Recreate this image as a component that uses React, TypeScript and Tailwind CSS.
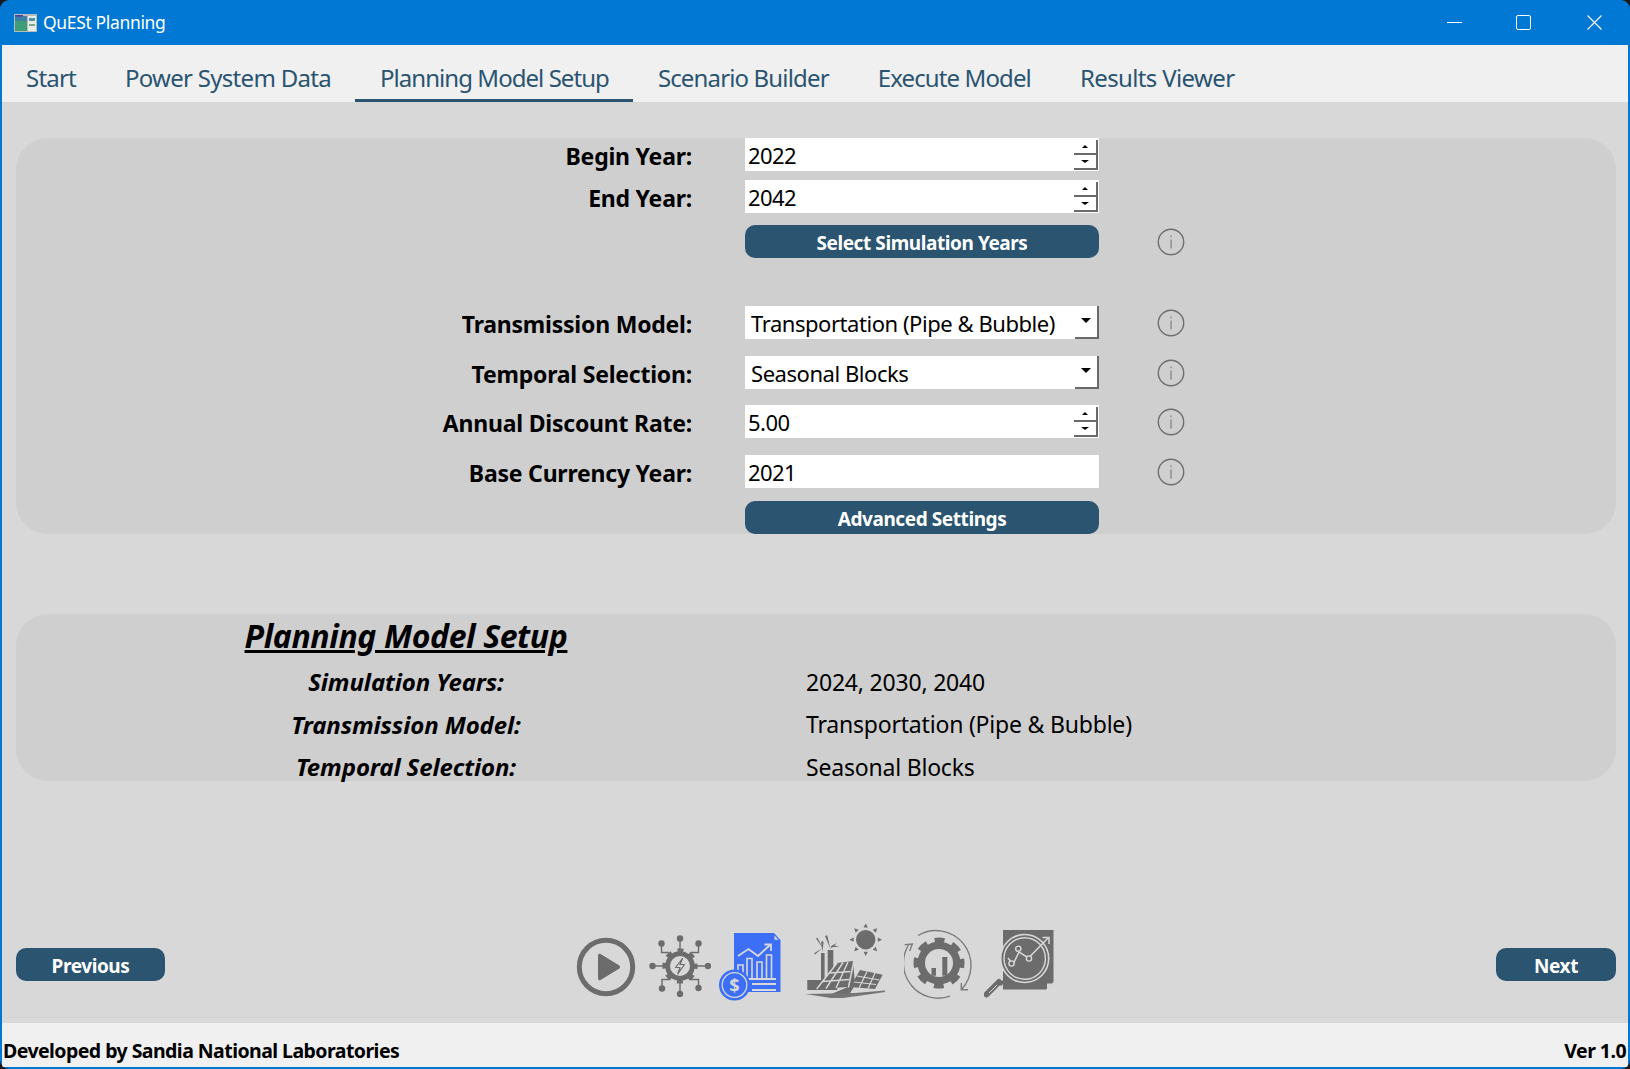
import React from "react";

const G = "#6c6c6c";
const BG = "#d8d8d8";

function Info() {
  return (
    <svg width="28" height="28" viewBox="0 0 28 28" className="shrink-0">
      <circle cx="14" cy="14" r="12.7" fill="none" stroke="#6e6e6e" strokeWidth="1.4" />
      <rect x="13.4" y="11.5" width="1.3" height="9" fill="#858585" />
      <rect x="13.4" y="7.5" width="1.3" height="1.8" fill="#858585" />
    </svg>
  );
}

function SpinBtn({ up }: { up?: boolean }) {
  return (
    <div className="w-[24px] h-[15px] flex items-center justify-center border-r-2 border-b-2 border-[#6a6a6a] bg-white">
      {up ? (
        <div className="w-0 h-0 border-x-[3px] border-x-transparent border-b-[3px] border-b-black" />
      ) : (
        <div className="w-0 h-0 border-x-[4px] border-x-transparent border-t-[3px] border-t-black" />
      )}
    </div>
  );
}

function Field({ value, kind }: { value: string; kind: "spin" | "combo" | "text" }) {
  return (
    <div className="w-[354px] h-[33px] bg-white flex items-center relative shrink-0">
      <span className={kind === "combo" ? "pl-[6px] pt-[1px] tracking-[-0.45px]" : "pl-[3px] pt-[1px] tracking-[-0.55px]"}>{value}</span>
      {kind === "spin" && (
        <div className="absolute right-[1px] top-[2px] flex flex-col">
          <SpinBtn up />
          <SpinBtn />
        </div>
      )}
      {kind === "combo" && (
        <div className="absolute right-0 top-0 w-[24px] h-[33px] border-r-2 border-b-2 border-[#6a6a6a] flex items-center justify-center pb-[2px]">
          <div className="w-0 h-0 border-x-[5px] border-x-transparent border-t-[5px] border-t-black" />
        </div>
      )}
    </div>
  );
}

function Row({ label, mt, info, children }: { label?: string; mt: string; info?: boolean; children: React.ReactNode }) {
  return (
    <div className={`flex items-center h-[33px] shrink-0 ${mt}`}>
      <div className="w-[676px] text-right font-bold text-[23px] tracking-[-0.22px] pt-[3px]">{label}</div>
      <div className="ml-[53px]">{children}</div>
      {info && (
        <div className="ml-[58px]">
          <Info />
        </div>
      )}
    </div>
  );
}

function Btn({ children, w }: { children: React.ReactNode; w: string }) {
  return (
    <button className={`${w} h-[33px] rounded-[10px] bg-[#2a5470] text-white font-bold text-[19px] tracking-[-0.42px] flex items-center justify-center shrink-0 pt-[4px]`}>
      {children}
    </button>
  );
}

function PlayIcon() {
  return (
    <svg width="62" height="62" viewBox="0 0 62 62" className="shrink-0">
      <circle cx="31" cy="31" r="26.7" fill="none" stroke={G} strokeWidth="5" />
      <path d="M23 19.5c0-1.5 1.2-2.2 2.5-1.5l18.5 11.3c1.3.8 1.3 2.6 0 3.4L25.5 44c-1.3.7-2.5 0-2.5-1.5z" fill={G} />
    </svg>
  );
}

function NetworkIcon() {
  const nodes = [
    [31, 3.5], [12.5, 8.5], [49.5, 8.5], [3.5, 31], [59, 31], [13, 53.5], [49.5, 53], [31, 59],
  ];
  return (
    <svg width="62" height="62" viewBox="0 0 62 62" className="shrink-0">
      <g stroke={G} strokeWidth="1.4" fill="none">
        <path d="M31 4V16M12.5 9V17.5H20M49.5 9V17.5H42M4 31H16M58 31H46M13 53V44.5H20M49.5 53V44.5H42M31 58V46" />
      </g>
      {nodes.map(([x, y], i) => (
        <circle key={i} cx={x} cy={y} r="3.2" fill={G} />
      ))}
      <circle cx="31" cy="31" r="14.8" fill={G} />
      <circle cx="31" cy="31" r="15.8" fill="none" stroke={G} strokeWidth="3.6" strokeDasharray="6 6.41" strokeDashoffset="3" />
      <circle cx="31" cy="31" r="10" fill={BG} />
      <path d="M33.5 23.5L26.5 32.5h4.5L28.8 38.8 35.5 29.5h-4.5z" fill="none" stroke={G} strokeWidth="1.2" strokeLinejoin="round" />
    </svg>
  );
}

function MoneyIcon() {
  const B = "#3c6ff5";
  return (
    <svg width="62" height="68" viewBox="0 0 62 68" className="shrink-0">
      <path d="M15 0H55L61.5 7V59H15z" fill={B} />
      <path d="M55.5 2.5L59.5 6.8H55.5z" fill={BG} />
      <path d="M19 23L29.5 16L39 23L51 12" fill="none" stroke={BG} strokeWidth="1.8" />
      <path d="M45.5 11.5H52V18" fill="none" stroke={BG} strokeWidth="1.8" />
      <g fill="none" stroke={BG} strokeWidth="1.6">
        <path d="M19 46V32H24V46" />
        <path d="M28 46V25.5H33V46" />
        <path d="M38 46V29H43V46" />
        <path d="M47.5 46V22H52.5V46" />
      </g>
      <path d="M19 46H57M33 51H57M33 57H57" stroke={BG} strokeWidth="1.8" />
      <circle cx="15.5" cy="52" r="15.5" fill={B} />
      <circle cx="15.5" cy="52" r="12.3" fill="none" stroke={BG} strokeWidth="1.3" />
      <text x="15.5" y="58.5" textAnchor="middle" fontSize="18" fontWeight="700" fill={BG} fontFamily="'Noto Sans', sans-serif">$</text>
    </svg>
  );
}

function SolarIcon() {
  const rays = [0, 45, 90, 135, 180, 225, 270, 315];
  return (
    <svg width="80" height="76" viewBox="0 0 80 76" className="shrink-0">
      <circle cx="60.7" cy="16.7" r="9.7" fill={G} />
      {rays.map((r) => (
        <path key={r} d="M60.7 0.5L62.8 4.6H58.6z" fill={G} transform={`rotate(${r} 60.7 16.7)`} />
      ))}
      <g fill={G}>
        <rect x="16" y="30" width="3.6" height="28" />
        <rect x="22.7" y="27" width="5.6" height="31" />
        <rect x="2.3" y="57" width="30" height="10" />
        <path d="M17.5 29L16 18.5h2.6zM17 25.5L10 31.5l-1-1.3zM18 25.5L11 15.5l1.4-.8z" />
        <path d="M25.5 26L20 13l2.2-.8zM25.5 26L32 20l-5 2.5zM25.5 24H34l-6-2z" />
      </g>
      <path d="M32 40L48 38L43 64L11.7 66z" fill={G} />
      <path d="M48 38L50 62L44 72H24L43 64z" fill={G} />
      <g stroke={BG} strokeWidth="1.4" fill="none">
        <path d="M32 40L11.7 66M43 39L31 65M38 39.5L21 65.5M24 50L45.5 48.5M17.5 58.5L44 56.5" />
        <path d="M48.8 38.5L43.5 64.5" />
      </g>
      <path d="M55 47L77.7 51.7L70 66L45 64z" fill={G} />
      <g stroke={BG} strokeWidth="1.2" fill="none">
        <path d="M52 53L74.5 57M49 59L71 61.5M62 48.5L54 65M70 50L63 65.5" />
      </g>
      <path d="M0 71L50 70L80 67.5V69L56 72.5L38 75H26z" fill="#757575" />
    </svg>
  );
}

function GearIcon() {
  return (
    <svg width="70" height="71" viewBox="0 0 70 71" className="shrink-0">
      <g fill="none" stroke="#7d7d7d" strokeWidth="1.4">
        <path d="M4.5 17A35 35 0 0 0 46 68.2" />
        <path d="M14 7.5A35 35 0 0 1 57.3 61.7" />
      </g>
      <path d="M0.7 16.7L8.3 16L5.7 23M57.3 55V61.7H64" fill="none" stroke="#7d7d7d" strokeWidth="1.4" />
      <circle cx="35" cy="35" r="21.5" fill={G} />
      <circle cx="35" cy="35" r="23.2" fill="none" stroke={G} strokeWidth="4.6" strokeDasharray="10 8.2" strokeDashoffset="5" />
      <circle cx="35" cy="35" r="14" fill={BG} />
      <rect x="27.5" y="40" width="4.5" height="7.7" fill={G} />
      <rect x="38.3" y="29" width="5" height="18.7" fill={G} />
    </svg>
  );
}

function SearchIcon() {
  return (
    <svg width="70" height="68" viewBox="0 0 70 68" className="shrink-0">
      <path d="M19 0H69.5V52L62 59.5H19z" fill={G} />
      <path d="M63 59V53.5H68.5z" fill={BG} />
      <circle cx="40.7" cy="28.5" r="24" fill={G} stroke={BG} strokeWidth="1.6" />
      <circle cx="40.7" cy="28.5" r="20.7" fill="none" stroke={BG} strokeWidth="1.4" />
      <path d="M2.5 64.5L15 52" stroke={G} strokeWidth="6" strokeLinecap="round" />
      <path d="M23 48L16 55" stroke={G} strokeWidth="3" />
      <path d="M13 55L5 63" stroke={BG} strokeWidth="1" />
      <path d="M24 28L29 34.5L35 22L44.5 28L64 8" fill="none" stroke={BG} strokeWidth="1.5" />
      <path d="M58.5 7.5H65V14" fill="none" stroke={BG} strokeWidth="1.5" />
      <circle cx="34.3" cy="18.7" r="2.6" fill={G} stroke={BG} strokeWidth="1.4" />
      <circle cx="27.5" cy="33.5" r="2.6" fill={G} stroke={BG} strokeWidth="1.4" />
      <circle cx="45" cy="28.5" r="2.6" fill={G} stroke={BG} strokeWidth="1.4" />
    </svg>
  );
}

function AppIcon() {
  return (
    <svg width="23" height="18" viewBox="0 0 23 18" className="shrink-0">
      <rect width="23" height="18" fill="#b8bcb8" />
      <rect x="1" y="2" width="12" height="15" fill="#3f9c78" />
      <rect x="1" y="2" width="12" height="5" fill="#3c7fa8" />
      <rect x="1" y="1" width="8" height="1.6" fill="#4a3f9c" />
      <rect x="14" y="2" width="8" height="15" fill="#e8ece8" />
      <rect x="15" y="4" width="6" height="3" fill="#4f8fa8" />
      <rect x="15" y="10" width="6" height="2" fill="#7aa888" />
    </svg>
  );
}

const tabs: [string, string][] = [
  ["Start", "tracking-[-0.8px] border-transparent"],
  ["Power System Data", "tracking-[-0.7px] border-transparent"],
  ["Planning Model Setup", "tracking-[-0.95px] border-[#2a5470]"],
  ["Scenario Builder", "tracking-[-0.85px] border-transparent"],
  ["Execute Model", "tracking-[-0.88px] border-transparent"],
  ["Results Viewer", "tracking-[-0.63px] border-transparent"],
];

export default function App() {
  return (
    <div className="w-[1630px] h-[1069px] bg-[#1a1a1a] font-['Noto_Sans',sans-serif] text-[22px] text-black overflow-hidden">
      <div className="w-full h-full rounded-[9px] overflow-hidden bg-[#0078d4] flex flex-col px-[2px] pb-[2px]">
        <div className="h-[45px] shrink-0 -mx-[2px] flex items-center text-white relative">
          <div className="ml-[14px]"><AppIcon /></div>
          <span className="ml-[6px] text-[17.5px] tracking-[-0.35px]">QuESt Planning</span>
          <div className="ml-auto flex items-center mr-[28px]">
            <div className="w-[15px] h-px bg-white" />
            <div className="ml-[54px] w-[15px] h-[15px] border border-white rounded-[2px]" />
            <svg width="15" height="15" viewBox="0 0 15 15" className="ml-[56px]">
              <path d="M0.5 0.5L14.5 14.5M14.5 0.5L0.5 14.5" stroke="#fff" strokeWidth="1.1" />
            </svg>
          </div>
        </div>

        <div className="h-[57px] shrink-0 bg-[#f0f0f0] text-[24px] text-[#2a5470]">
          <div className="flex h-full -ml-[1px]">
            {tabs.map(([t, c]) => (
              <div key={t} className={`pl-[25px] pr-[24px] h-full flex items-center pt-[12px] border-b-[3px] ${c}`}>
                {t}
              </div>
            ))}
          </div>
        </div>

        <div className="flex-1 bg-[#d8d8d8] flex flex-col">
          <div className="mt-[36px] ml-[14px] mr-[12px] h-[396px] bg-[#cfcfcf] rounded-[32px] flex flex-col">
            <Row label="Begin Year:" mt="mt-0"><Field value="2022" kind="spin" /></Row>
            <Row label="End Year:" mt="mt-[9px]"><Field value="2042" kind="spin" /></Row>
            <Row mt="mt-[12px]" info><Btn w="w-[354px]">Select Simulation Years</Btn></Row>
            <Row label="Transmission Model:" mt="mt-[48px]" info><Field value="Transportation (Pipe & Bubble)" kind="combo" /></Row>
            <Row label="Temporal Selection:" mt="mt-[17px]" info><Field value="Seasonal Blocks" kind="combo" /></Row>
            <Row label="Annual Discount Rate:" mt="mt-[16px]" info><Field value="5.00" kind="spin" /></Row>
            <Row label="Base Currency Year:" mt="mt-[17px]" info><Field value="2021" kind="text" /></Row>
            <Row mt="mt-[13px]"><Btn w="w-[354px]">Advanced Settings</Btn></Row>
          </div>

          <div className="mt-[80px] ml-[14px] mr-[12px] h-[167px] bg-[#cfcfcf] rounded-[32px] flex flex-col gap-[14.5px]">
            <div className="w-[780px] h-[44px] mb-[-4.5px] flex items-center justify-center italic font-bold text-[32px] underline tracking-[-0.4px] shrink-0">
              Planning Model Setup
            </div>
            {[
              ["Simulation Years:", "2024, 2030, 2040"],
              ["Transmission Model:", "Transportation (Pipe & Bubble)"],
              ["Temporal Selection:", "Seasonal Blocks"],
            ].map(([a, b]) => (
              <div key={a} className="flex h-[28px] items-center shrink-0">
                <div className="w-[780px] text-center italic font-bold text-[24px] tracking-[-0.12px]">{a}</div>
                <div className="ml-[10px] text-[23px] tracking-[-0.2px]">{b}</div>
              </div>
            ))}
          </div>

          <div className="flex-1 flex items-end ml-[14px] mr-[12px] pb-[42px]">
            <Btn w="w-[149px]">Previous</Btn>
            <div className="ml-[410px] -mb-[20px] flex items-start h-[78px]">
              <div className="mt-[13px]"><PlayIcon /></div>
              <div className="ml-[12px] mt-[12px]"><NetworkIcon /></div>
              <div className="ml-[8px] mt-[10px]"><MoneyIcon /></div>
              <div className="ml-[24px]"><SolarIcon /></div>
              <div className="ml-[19px] mt-[5px]"><GearIcon /></div>
              <div className="ml-[10px] mt-[7px]"><SearchIcon /></div>
            </div>
            <div className="ml-auto"><Btn w="w-[120px]">Next</Btn></div>
          </div>
        </div>

        <div className="h-[44px] shrink-0 bg-[#f0f0f0] flex items-end justify-between pl-[1px] pr-[2px] pb-[1px] font-bold text-[19.5px] tracking-[-0.55px] leading-[30px]">
          <span>Developed by Sandia National Laboratories</span>
          <span>Ver 1.0</span>
        </div>
      </div>
    </div>
  );
}
